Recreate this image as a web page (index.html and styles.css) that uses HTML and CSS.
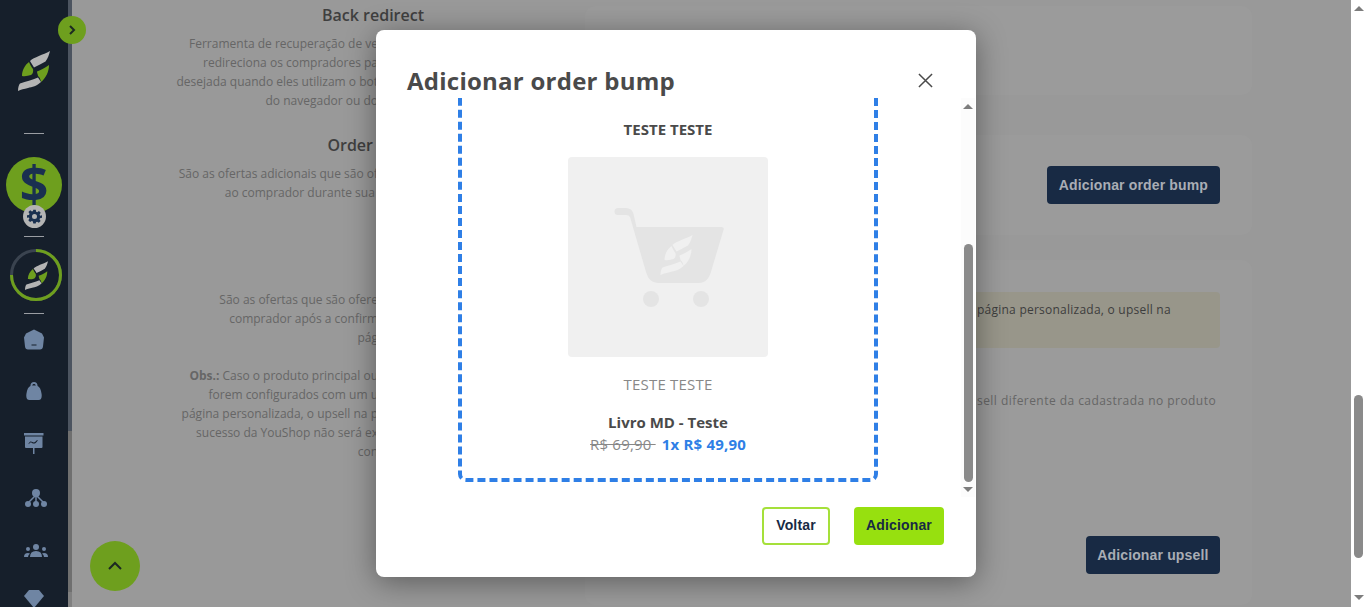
FILE: index.html
```html
<!DOCTYPE html>
<html lang="pt-BR">
<head>
  <meta charset="UTF-8" />
  <meta name="viewport" content="width=device-width, initial-scale=1.0"/>
  <title>Adicionar order bump</title>
  <link rel="stylesheet" href="styles.css">
</head>
<body>

  <svg class="defs" width="0" height="0">
    <symbol id="logo" viewBox="0 0 32 40">
      <path class="logo-a" d="M32 0C25 4 16 6 12 10C13 12 15 14.500 16 16.500C20 14.500 24 12.500 27.500 10.500C30 7 31 4 32 0Z"/>
      <path class="logo-b" d="M11 11C7 14 4 19 4 25C7 25.500 10 25 13 24C15 23 15.500 20.500 15 18C13.500 16 12 13.500 11 11Z"/>
      <path class="logo-b" d="M19 20.500C23 19 27 17 31 14C31 20.500 28 27 23 31C22.500 28 21.500 26 20 25C20 24 19 22 19 20.500Z"/>
      <path class="logo-a" d="M0 40C0 36 1 33.500 2 32.500C8 30.500 14 29 20 26.500C21 28 22 29.500 23 31C19 35 14 36 10 37C6 38 3 38.500 0 40Z"/>
    </symbol>
  </svg>

  <div class="app">
    <!-- Menu lateral -->
    <aside class="sidebar">
      <svg class="logo"><use href="#logo"/></svg>
      <hr class="sep sep-first">
      <div class="money">
        <span class="money-sign">$</span>
        <span class="gear">
          <svg viewBox="0 0 24 24" width="18" height="18"><path fill-rule="evenodd" d="M10 1h4l.6 3.200 1.700.8 2.800-1.700 2.800 2.800-1.700 2.800.8 1.700L24 10v4l-3.200.6-.8 1.700 1.700 2.800-2.800 2.800-2.800-1.700-1.700.8L14 23h-4l-.6-3.200-1.700-.8-2.800 1.700-2.800-2.800 1.700-2.800-.8-1.700L0 14v-4l3.200-.6.8-1.700L2.300 4.900l2.800-2.800 2.800 1.700 1.700-.8zM12 8a4 4 0 1 0 0 8 4 4 0 0 0 0-8z"/></svg>
        </span>
      </div>
      <hr class="sep">
      <div class="level">
        <svg class="level-ring" viewBox="0 0 52 52" width="52" height="52">
          <circle class="ring-bg" cx="26" cy="26" r="24.500"/>
          <circle class="ring-on" cx="26" cy="26" r="24.500" pathLength="100" stroke-dasharray="75 25" transform="rotate(-90 26 26)"/>
        </svg>
        <svg class="level-logo"><use href="#logo"/></svg>
      </div>
      <hr class="sep">
      <nav class="menu">
        <a class="menu-item">
          <svg viewBox="0 0 20 20" width="20" height="21"><path fill-rule="evenodd" d="M10 0l8 4 2 4-1 9q-.3 3-3 3H4q-2.700 0-3-3L0 8l2-4zM7.500 15v1h5v-1z"/></svg>
        </a>
        <a class="menu-item">
          <svg viewBox="0 0 16 18" width="16" height="18"><path fill-rule="evenodd" d="M8 0c2.200 0 3.500 1.500 3.600 4 2 .8 3.400 3.500 4 8 .5 4-.5 6-3 6H3.400c-2.500 0-3.500-2-3-6 .6-4.500 2-7.200 4-8C4.500 1.500 5.800 0 8 0zm0 2C7 2 6.300 2.700 6.200 3.500h3.600C9.700 2.700 9 2 8 2z"/></svg>
        </a>
        <a class="menu-item">
          <svg viewBox="0 0 20 21" width="20" height="21"><path fill-rule="evenodd" d="M0 0h19.500v2.500H0zM1 3.500h17.500V14q0 1-1 1h-7v6h-1.500v-6H2q-1 0-1-1zM4.500 10.500c1.500-2.500 2.500-2.500 4-1.500s2.500.5 4-1.500l1.500-.5-1 1.500c-2 2.500-3.200 2.500-5 1.500-1.200-.7-2-.5-3 1.200z"/></svg>
        </a>
        <a class="menu-item menu-item-low">
          <svg viewBox="0 0 22 18" width="22" height="18"><circle cx="11" cy="4" r="4"/><circle cx="3" cy="15" r="3"/><circle cx="11" cy="15" r="3"/><circle cx="19" cy="15" r="3"/><path class="menu-line" d="M10 7L4 13M11 7v6M12 7l6 6"/></svg>
        </a>
        <a class="menu-item menu-item-low">
          <svg viewBox="0 0 24 13" width="24" height="13"><circle cx="12" cy="3" r="3"/><circle cx="4" cy="5" r="2"/><circle cx="20" cy="5" r="2"/><path d="M6 13q0-6 6-6t6 6zM0 13q0-4 4-4 1 0 2 .5Q4 11 4 13zM24 13q0-4-4-4-1 0-2 .5 2 1.500 2 3.500z"/></svg>
        </a>
        <a class="menu-item">
          <svg viewBox="0 0 20 18" width="20" height="18"><path d="M5 0h10l5 6-10 12L0 6z"/></svg>
        </a>
      </nav>
    </aside>
    <div class="side-track"><div class="side-thumb"></div></div>

    <!-- Conteudo atras do modal -->
    <main class="content">
      <div class="texts">
        <h3 class="text-title text-title-back">Back redirect</h3>
        <p class="text-body">Ferramenta de recuperação de ve<br>redireciona os compradores pa<br>desejada quando eles utilizam o bot<br>do navegador ou do</p>
        <h3 class="text-title text-title-next">Order</h3>
        <p class="text-body">São as ofertas adicionais que são of<br>ao comprador durante sua&nbsp;</p>
        <p class="text-body text-body-upsell">São as ofertas que são ofere<br>comprador após a confirm<br>pág</p>
        <p class="text-body text-body-obs"><b>Obs.:</b> Caso o produto principal ou<br>forem configurados com um u<br>página personalizada, o upsell na p<br>sucesso da YouShop não será ex<br>con</p>
      </div>
      <div class="cards">
        <section class="card card-back"></section>
        <section class="card card-bump">
          <button class="btn-navy">Adicionar order bump</button>
        </section>
        <section class="card card-upsell">
          <div class="note">página personalizada, o upsell na</div>
          <p class="upsell-text">sell diferente da cadastrada no produto</p>
          <button class="btn-navy btn-upsell">Adicionar upsell</button>
        </section>
      </div>
    </main>

    <div class="page-scroll">
      <span class="arrow-up"></span>
      <div class="page-thumb"></div>
      <span class="arrow-down"></span>
    </div>
  </div>

  <button class="toggle">
    <svg viewBox="0 0 10 12" width="10" height="12"><path d="M3 2l4 4-4 4"/></svg>
  </button>
  <button class="to-top">
    <svg viewBox="0 0 16 10" width="16" height="10"><path d="M2 8l6-6 6 6"/></svg>
  </button>

  <!-- Modal -->
  <div class="modal">
    <div class="modal-head">
      <h2 class="modal-title">Adicionar order bump</h2>
      <svg class="modal-close" viewBox="0 0 16 16" width="15" height="15"><path d="M1 1l14 14M15 1L1 15"/></svg>
    </div>
    <div class="modal-body">
      <div class="modal-scroll">
        <div class="bump">
          <div class="bump-name">TESTE TESTE</div>
          <div class="bump-img">
            <svg viewBox="0 0 200 200" width="200" height="200">
              <path class="cart" d="M50 51h8q6 0 7.500 6l3 13h85q3 0 2 3l-12 40q-3 13-13 13H90q-9 0-12-11L62 60q-1-2-4-2h-8a3.500 3.500 0 0 1 0-7z"/>
              <circle class="cart" cx="83" cy="142" r="8"/>
              <circle class="cart" cx="133" cy="142" r="8"/>
              <svg class="cart-logo" x="92" y="78" width="33" height="40"><use href="#logo"/></svg>
            </svg>
          </div>
          <div class="bump-desc">TESTE TESTE</div>
          <div class="bump-product">Livro MD - Teste</div>
          <div class="bump-price"><s>R$ 69,90&nbsp;</s><b>1x R$ 49,90</b></div>
        </div>
      </div>
      <div class="modal-bar">
        <span class="arrow-up"></span>
        <div class="modal-thumb"></div>
        <span class="arrow-down"></span>
      </div>
    </div>
    <div class="modal-foot">
      <button class="btn-back">Voltar</button>
      <button class="btn-add">Adicionar</button>
    </div>
  </div>

</body>
</html>
```

FILE: styles.css
```css
* {
  box-sizing: border-box;
}

html, body {
  margin: 0;
  height: 100%;
  overflow: hidden;
}

body {
  font-family: 'Open Sans', sans-serif;
  background: #999;
}

.defs {
  position: absolute;
}

.logo-a {
  fill: var(--logo-a, #b4b4b4);
}

.logo-b {
  fill: var(--logo-b, #6e9f1e);
}

.app {
  display: flex;
  height: 607px;
}

/* sidebar */
.sidebar {
  width: 68px;
  flex: none;
  background: #161f2b;
  display: flex;
  flex-direction: column;
  align-items: center;
  overflow: hidden;
}

.logo {
  width: 32px;
  height: 40px;
  flex: none;
  margin-top: 51px;
}

.sep {
  width: 20px;
  height: 1px;
  flex: none;
  margin: 12px 0 0;
  border: 0;
  background: #9a9da3;
}

.sep-first {
  margin-top: 42px;
}

.money {
  position: relative;
  width: 56px;
  height: 56px;
  flex: none;
  margin: 23px 0 11px;
  padding-bottom: 4px;
  border-radius: 50%;
  background: #6e9f1e;
  display: flex;
  align-items: center;
  justify-content: center;
}

.money-sign {
  font-size: 50px;
  font-weight: 700;
  line-height: 1;
  color: #1a3050;
}

.gear {
  position: absolute;
  left: 16.500px;
  top: 48px;
  width: 23px;
  height: 23px;
  border-radius: 50%;
  background: #b4b4b4;
  display: flex;
  align-items: center;
  justify-content: center;
}

.gear svg {
  width: 15px;
  height: 15px;
  fill: #1a3050;
}

.level {
  position: relative;
  left: 2px;
  width: 52px;
  height: 52px;
  flex: none;
  margin-top: 12px;
}

.ring-bg, .ring-on {
  fill: none;
  stroke-width: 3;
}

.ring-bg {
  stroke: #3a434f;
}

.ring-on {
  stroke: #6e9f1e;
}

.level-logo {
  position: absolute;
  left: 14.500px;
  top: 11.500px;
  width: 23px;
  height: 29px;
}

.menu {
  display: flex;
  flex-direction: column;
  align-items: center;
  flex: none;
  margin-top: -1px;
}

.menu-item {
  height: 52px;
  width: 68px;
  display: flex;
  align-items: center;
  justify-content: center;
  flex: none;
}

.menu-item svg {
  fill: #6f85a3;
}

.menu-item-low {
  padding: 6px 0 0 4px;
}

.menu-line {
  fill: none;
  stroke: #6f85a3;
  stroke-width: 1.500;
}

.side-track {
  width: 4px;
  flex: none;
  background: #4c5460;
  padding-top: 431px;
  height: 607px;
}

.side-thumb {
  height: 161px;
  background: #6f6f6f;
  box-shadow: 0 15px 0 #808080;
}

/* background content */
.content {
  flex: 1;
  display: flex;
  min-width: 0;
  overflow: hidden;
  padding-left: 101px;
  background: #999;
}

.texts {
  width: 205px;
  flex: none;
  padding-top: 4px;
  text-align: right;
  white-space: nowrap;
}

.text-title {
  margin: 0;
  font-size: 16px;
  font-weight: 600;
  line-height: 22px;
  color: #3f3f3f;
}

.text-title-back {
  margin-right: -46px;
}

.text-title-next {
  margin-top: 24px;
  padding-right: 5px;
}

.text-body {
  margin: 8px 0 0;
  font-size: 12px;
  line-height: 19px;
  color: #666;
}

.text-body-upsell {
  margin-top: 88px;
}

.text-body-obs {
  margin-top: 19px;
}

.cards {
  width: 667px;
  flex: none;
  margin-left: 207px;
  padding-top: 6px;
  display: flex;
  flex-direction: column;
}

.card {
  background: #9b9b9b;
  border-radius: 10px;
  padding: 31px 32px;
  flex: none;
}

.card-back {
  height: 89px;
}

.card-bump {
  height: 100px;
  margin-top: 40px;
  display: flex;
  justify-content: flex-end;
}

.card-upsell {
  height: 345px;
  margin-top: 25px;
  padding-top: 32px;
  position: relative;
  display: flex;
  flex-direction: column;
  align-items: flex-end;
}

.btn-navy {
  height: 38px;
  padding: 0 12px;
  border: 0;
  border-radius: 4px;
  background: #182a44;
  color: #a9adb5;
  font-family: 'Liberation Sans', sans-serif;
  font-size: 14px;
  font-weight: 700;
  letter-spacing: 0.15px;
}

.btn-upsell {
  margin-top: 125px;
  padding: 0 11.500px;
}

.note {
  width: 603px;
  height: 56px;
  padding: 8px 0 0 360px;
  border-radius: 4px;
  background: #98968a;
  font-size: 12px;
  letter-spacing: 0.24px;
  line-height: 20px;
  color: #3d3d3d;
  white-space: nowrap;
}

.upsell-text {
  width: 603px;
  margin: 43px 0 0;
  padding-left: 360px;
  font-size: 12px;
  letter-spacing: 0.45px;
  line-height: 20px;
  color: #666;
  white-space: nowrap;
}

.page-scroll {
  width: 15px;
  flex: none;
  position: relative;
  background: #fff;
  display: flex;
  flex-direction: column;
  align-items: center;
}

.page-scroll .arrow-up {
  margin-top: 6px;
}

.page-thumb {
  width: 9px;
  height: 163px;
  margin-top: 384px;
  border-radius: 5px;
  background: #8a8a8a;
}

.page-scroll .arrow-down {
  margin-top: 37px;
}

.arrow-up, .arrow-down {
  width: 0;
  height: 0;
  flex: none;
  border-left: 5px solid transparent;
  border-right: 5px solid transparent;
}

.arrow-up {
  border-bottom: 5px solid #7d7d7d;
}

.arrow-down {
  border-top: 5px solid #7d7d7d;
}

/* floating buttons */
.toggle, .to-top {
  position: absolute;
  padding: 0;
  border: 0;
  border-radius: 50%;
  background: #6e9f1e;
  display: flex;
  align-items: center;
  justify-content: center;
}

.toggle {
  left: 58px;
  top: 16px;
  width: 28px;
  height: 28px;
}

.to-top {
  left: 90px;
  top: 541px;
  width: 50px;
  height: 50px;
}

.toggle path, .to-top path {
  fill: none;
  stroke: #1c2a22;
  stroke-width: 2;
}

/* modal */
.modal {
  position: absolute;
  left: 376px;
  top: 30px;
  width: 600px;
  height: 547px;
  background: #fff;
  border-radius: 8px;
  box-shadow: 0 5px 30px rgba(0, 0, 0, 0.4);
  display: flex;
  flex-direction: column;
}

.modal-head {
  height: 68px;
  flex: none;
  padding: 34px 43px 0 31px;
  display: flex;
  justify-content: space-between;
  align-items: flex-start;
}

.modal-title {
  margin: 0;
  font-size: 24px;
  font-weight: 700;
  letter-spacing: 0.25px;
  line-height: 34px;
  color: #4a4a4a;
}

.modal-close {
  margin-top: 8.500px;
}

.modal-close path {
  stroke: #4a4a4a;
  stroke-width: 1.600;
  fill: none;
}

.modal-body {
  height: 399px;
  flex: none;
  display: flex;
}

.modal-scroll {
  flex: 1;
  overflow: hidden;
  padding-left: 82px;
}

.bump {
  width: 420px;
  margin-top: -40px;
  padding: 57px 0 24px;
  border: 4px dashed #2f7fe6;
  border-radius: 8px;
  text-align: center;
}

.bump-name {
  font-size: 15px;
  font-weight: 700;
  line-height: 20px;
  color: #4a4a4a;
}

.bump-img {
  width: 200px;
  height: 200px;
  margin: 18px auto 0;
  border-radius: 4px;
  background: #f0f0f0;
}

.bump-img svg {
  display: block;
}

.cart {
  fill: #e4e4e4;
}

.cart-logo {
  --logo-a: #f0f0f0;
  --logo-b: #f0f0f0;
}

.bump-desc {
  margin-top: 17px;
  font-size: 15px;
  letter-spacing: 0.2px;
  line-height: 20px;
  color: #888;
}

.bump-product {
  margin-top: 18px;
  font-size: 15px;
  font-weight: 700;
  line-height: 20px;
  color: #4a4a4a;
}

.bump-price {
  margin-top: 2px;
  font-size: 15px;
  letter-spacing: 0.2px;
  line-height: 20px;
  color: #888;
}

.bump-price b {
  margin-left: 6px;
  color: #2f7fe6;
}

.modal-bar {
  width: 14px;
  flex: none;
  margin-right: 1px;
  background: #fcfcfc;
  display: flex;
  flex-direction: column;
  align-items: center;
}

.modal-bar .arrow-up {
  margin-top: 6px;
}

.modal-thumb {
  width: 9px;
  height: 238px;
  margin-top: 135px;
  border-radius: 5px;
  background: #8a8a8a;
}

.modal-bar .arrow-down {
  margin-top: 5px;
}

.modal-foot {
  flex: 1;
  padding: 10px 32px 0 0;
  display: flex;
  justify-content: flex-end;
  align-items: flex-start;
  gap: 24px;
}

.modal-foot button {
  height: 38px;
  padding-bottom: 3px;
  border-radius: 4px;
  font-family: 'Liberation Sans', sans-serif;
  font-size: 14px;
  font-weight: 700;
  letter-spacing: 0.15px;
  color: #182a44;
}

.btn-back {
  width: 68px;
  background: #fff;
  border: 2px solid #a5e03a;
}

.btn-add {
  width: 90px;
  background: #97e00f;
  border: 0;
}
```
